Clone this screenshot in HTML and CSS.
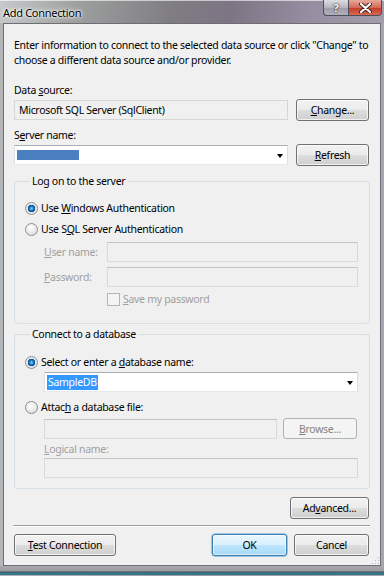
FILE: index.html
```html
<!DOCTYPE html>
<html lang="en">
<head>
    <meta charset="UTF-8">
    <meta name="viewport" content="width=device-width, initial-scale=1.0">
    <title>Add Connection</title>
    <link rel="stylesheet" href="styles.css">
</head>
<body>
    <div class="window">
        <div class="titlebar">
            <span class="title">Add Connection</span>
            <div class="caption-buttons">
                <span class="cap-btn help">?</span>
                <span class="cap-btn close">
                    <svg width="13" height="10" viewBox="0 0 13 10">
                        <path d="M2 1 L11 9 M11 1 L2 9" stroke="#3a2020" stroke-width="4" stroke-linecap="round"/>
                        <path d="M2 1 L11 9 M11 1 L2 9" stroke="#ffffff" stroke-width="2.2" stroke-linecap="round"/>
                    </svg>
                </span>
            </div>
        </div>

        <div class="client">
            <p class="intro">Enter information to connect to the selected data source or click "Change" to<br>choose a different data source and/or provider.</p>

            <div class="label first">Data <u>s</u>ource:</div>
            <div class="row">
                <div class="textbox readonly wide">Microsoft SQL Server (SqlClient)</div>
                <button class="btn side"><u>C</u>hange...</button>
            </div>

            <div class="label">S<u>e</u>rver name:</div>
            <div class="row">
                <div class="textbox combo wide"><span class="redacted"></span><span class="arrow"></span></div>
                <button class="btn side"><u>R</u>efresh</button>
            </div>

            <fieldset class="group logon">
                <legend>Log on to the server</legend>
                <div class="radio-row"><span class="radio checked"></span><span>Use <u>W</u>indows Authentication</span></div>
                <div class="radio-row second"><span class="radio"></span><span>Use S<u>Q</u>L Server Authentication</span></div>
                <div class="field-row">
                    <span class="muted"><u>U</u>ser name:</span>
                    <div class="textbox disabled"></div>
                </div>
                <div class="field-row next">
                    <span class="muted"><u>P</u>assword:</span>
                    <div class="textbox disabled"></div>
                </div>
                <div class="check-row"><span class="checkbox"></span><span class="muted"><u>S</u>ave my password</span></div>
            </fieldset>

            <fieldset class="group database">
                <legend>Connect to a database</legend>
                <div class="radio-row"><span class="radio checked"></span><span>Select or enter a <u>d</u>atabase name:</span></div>
                <div class="textbox combo indent"><span class="selected">SampleDB</span><span class="arrow"></span></div>
                <div class="radio-row attach"><span class="radio"></span><span>Attac<u>h</u> a database file:</span></div>
                <div class="file-row indent">
                    <div class="textbox disabled file"></div>
                    <button class="btn browse" disabled><u>B</u>rowse...</button>
                </div>
                <div class="muted indent logical"><u>L</u>ogical name:</div>
                <div class="textbox disabled indent logical-box"></div>
            </fieldset>

            <div class="advanced-row">
                <button class="btn advanced">Ad<u>v</u>anced...</button>
            </div>
            <div class="separator"></div>
            <div class="bottom-row">
                <button class="btn test"><u>T</u>est Connection</button>
                <button class="btn default ok">OK</button>
                <button class="btn cancel">Cancel</button>
            </div>
            <span class="grip"></span>
        </div>
        <div class="bottom-frame"></div>
    </div>
</body>
</html>
```

FILE: styles.css
```css
body {
    margin: 0;
    font-family: "Noto Sans", sans-serif;
    font-size: 10.5px;
    letter-spacing: -0.3px;
    color: #000;
    background: #9a9aa2;
}
u {
    text-decoration: underline;
    text-underline-offset: 1px;
}
.window {
    width: 384px;
    height: 576px;
    overflow: hidden;
    background: linear-gradient(90deg, #b4b6b8, #a09ca6 50%, #a8a4b0);
}
.titlebar {
    height: 23px;
    display: flex;
    align-items: flex-start;
    justify-content: space-between;
    background: linear-gradient(100deg, #c6c9ca 0%, #9ea09f 20%, #7f7d82 45%, #7d7484 60%, #968ea0 80%, #a29cac 100%);
    box-shadow: inset 0 1px 0 rgba(255, 255, 255, 0.6);
}
.title {
    padding: 5px 0 0 3px;
    font-size: 11px;
    color: #000;
    text-shadow: 0 0 6px #fff, 0 0 3px #fff, 0 0 2px #fff;
}
.caption-buttons {
    display: flex;
    padding-right: 2px;
}
.cap-btn {
    height: 16px;
    display: flex;
    align-items: center;
    justify-content: center;
    border: 1px solid #4e4e58;
    border-top: none;
    box-sizing: border-box;
}
.help {
    width: 25px;
    border-right: none;
    border-radius: 0 0 0 4px;
    background: linear-gradient(180deg, #dcdce2, #b6b6c0 50%, #9c9ca8 51%, #b0b0bc);
    color: #fff;
    font-weight: bold;
    font-size: 11px;
    text-shadow: 0 0 2px #222, 0 0 1px #222;
}
.close {
    width: 34px;
    border-radius: 0 0 4px 0;
    background: linear-gradient(180deg, #e8a89c, #d26a58 50%, #c0392b 51%, #d86a50);
}
.client {
    position: relative;
    height: 543px;
    box-sizing: border-box;
    margin: 0 3px;
    padding: 14px 10px 0 10px;
    background: #f0f0f0;
    border: 1px solid #6e6e72;
}
.intro {
    margin: 0;
    line-height: 15px;
    white-space: nowrap;
}
.label {
    line-height: 15px;
    margin: 7px 0 1px;
}
.label.first {
    margin-top: 15px;
}
.row {
    display: flex;
    align-items: center;
    gap: 8px;
    height: 22px;
    margin-right: 1px;
}
.textbox {
    height: 20px;
    box-sizing: border-box;
    border: 1px solid #abadb3;
    border-color: #abadb3 #dbdfe6 #e3e9ef #e2e3ea;
    background: #fff;
    position: relative;
    display: flex;
    align-items: center;
    padding-left: 3px;
}
.wide {
    flex: 1;
}
.readonly {
    background: #f0f0f0;
    border-color: #d6d6d6;
    padding-left: 4px;
}
.disabled {
    background: #f0f0f0;
    border-color: #c3c3c3 #d9d9d9 #dcdcdc #d9d9d9;
}
.arrow {
    position: absolute;
    right: 4px;
    top: 8px;
    border-left: 3px solid transparent;
    border-right: 3px solid transparent;
    border-top: 4px solid #000;
}
.redacted {
    width: 62px;
    height: 10px;
    margin-left: -1px;
    background: #4a7fc1;
}
.selected {
    background: #3399ff;
    color: #fff;
    line-height: 15px;
    padding: 0 1px;
    margin-left: -1px;
}
.btn {
    height: 22px;
    padding: 0;
    font: inherit;
    letter-spacing: inherit;
    color: #000;
    border: 1px solid #707070;
    border-radius: 3px;
    background: linear-gradient(180deg, #f2f2f2 0%, #ebebeb 50%, #dddddd 51%, #cfcfcf 100%);
    box-shadow: inset 0 0 0 1px rgba(255, 255, 255, 0.7);
}
.side {
    width: 73px;
}
.group {
    margin: 8px 0 0;
    padding: 0 11px;
    border: 1px solid #d5dfe5;
    border-radius: 3px;
    min-width: 0;
}
.group legend {
    margin-left: 4px;
    padding: 0 2px;
    line-height: 15px;
}
.logon {
    padding-top: 9px;
    padding-bottom: 15px;
}
.database {
    margin-top: 3px;
    padding-top: 10px;
    padding-bottom: 10px;
}
.radio-row {
    height: 20px;
    display: flex;
    align-items: center;
}
.radio-row.second {
    margin-top: 1px;
}
.radio-row.attach {
    margin-top: 5px;
    margin-bottom: 1px;
}
.radio {
    width: 13px;
    height: 13px;
    box-sizing: border-box;
    border-radius: 50%;
    border: 1px solid #8e8f8f;
    background: radial-gradient(circle at 40% 35%, #ffffff, #e6e6e6 60%, #d0d0d0);
    margin: 0 3px 0 -1px;
}
.radio.checked {
    background: radial-gradient(circle at 50% 50%, #7fd3ff 0, #1f7fc4 2px, #0a4a8a 3.5px, #dfe5ea 4px, #f6f6f6 100%);
}
.field-row {
    display: grid;
    grid-template-columns: 63px 1fr;
    align-items: center;
    margin: 3px 0 0 18px;
}
.field-row.next {
    margin-top: 5px;
}
.muted {
    color: #a0a0a0;
}
.check-row {
    height: 18px;
    display: flex;
    align-items: center;
    margin: 3px 0 0 81px;
}
.checkbox {
    width: 13px;
    height: 13px;
    box-sizing: border-box;
    border: 1px solid #b5b5b5;
    background: #f4f4f4;
    margin-right: 3px;
}
.indent {
    margin-left: 18px;
}
.file-row {
    display: flex;
    align-items: center;
    gap: 6px;
    height: 21px;
}
.file {
    flex: 1;
}
.browse {
    width: 74px;
    height: 21px;
    color: #838383;
    border-color: #adb2b5;
    background: #f4f4f4;
    box-shadow: none;
    margin-right: 1px;
}
.logical {
    line-height: 15px;
    margin-top: 3px;
}
.logical-box {
    margin-top: 1px;
}
.advanced-row {
    display: flex;
    justify-content: flex-end;
    margin-top: 8px;
    margin-right: 1px;
}
.advanced {
    width: 79px;
}
.separator {
    margin: 6px 0 0 -1px;
    border-top: 1px solid #a0a0a0;
    border-bottom: 1px solid #ffffff;
    height: 0;
}
.bottom-row {
    display: flex;
    gap: 7px;
    margin-top: 7px;
    margin-right: 1px;
}
.test {
    width: 102px;
}
.ok {
    width: 75px;
    margin-left: auto;
}
.cancel {
    width: 75px;
}
.default {
    border-color: #3c7fb1;
    background: linear-gradient(180deg, #eaf6fd 0%, #d9f0fc 50%, #bee6fd 51%, #a7d9f5 100%);
    box-shadow: inset 0 0 0 1px rgba(255, 255, 255, 0.6), 0 0 0 0.5px #48a0d8;
}
.grip {
    position: absolute;
    right: 1px;
    bottom: 1px;
    width: 8px;
    height: 8px;
    background: radial-gradient(circle, #b8b8b8 0.8px, transparent 1px) 0 0 / 3px 3px;
    clip-path: polygon(100% 0, 100% 100%, 0 100%);
}
.bottom-frame {
    height: 9px;
    background: linear-gradient(180deg, #a8a8ac 0, #9c9ca4 5px, #454a50 6px, #3a7f92 7px, #2c6f84 9px);
}
```
